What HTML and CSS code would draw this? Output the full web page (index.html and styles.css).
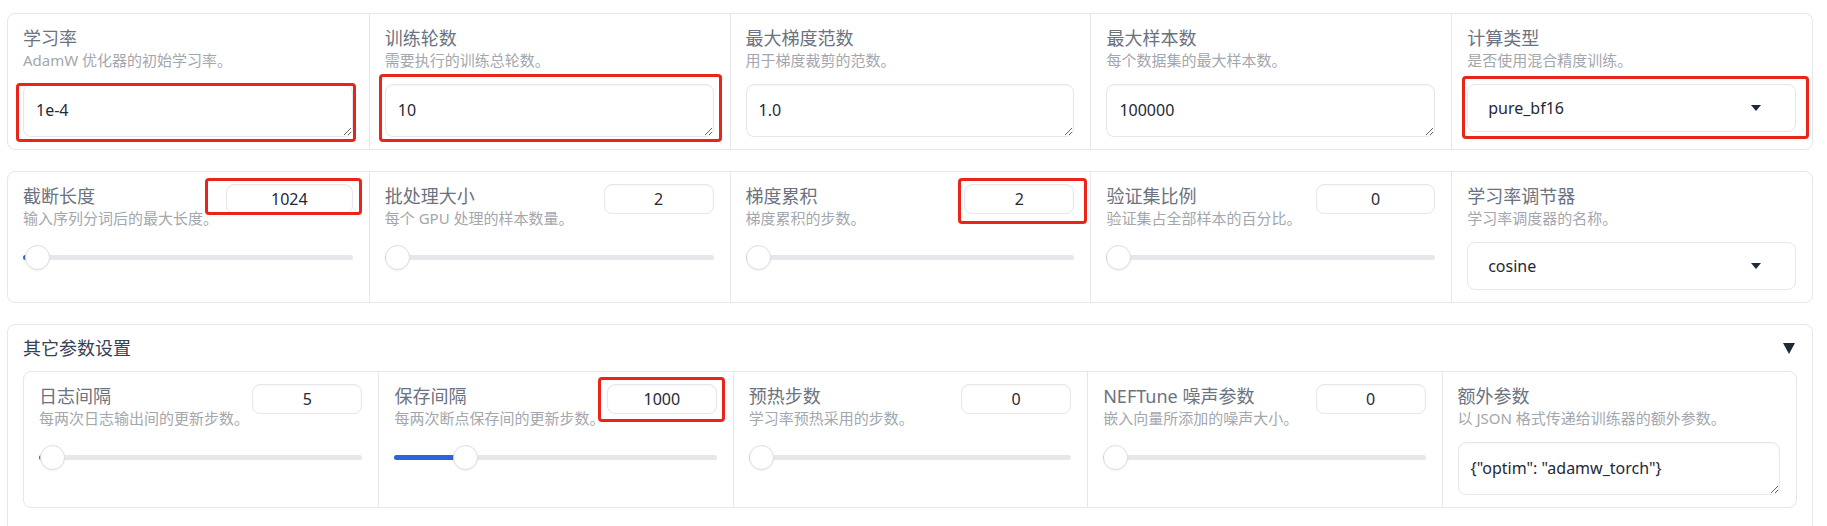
FILE: index.html
```html
<!DOCTYPE html>
<html lang="zh">
<head>
    <meta charset="UTF-8">
    <meta name="viewport" content="width=device-width, initial-scale=1.0">
    <title>训练参数</title>
    <link rel="stylesheet" href="styles.css">
</head>
<body>

    <div class="page">

        <!-- Row 1: basic training params -->
        <div class="block grid">
            <div class="cell">
                <div class="head">
                    <div class="text">
                        <span class="label">学习率</span>
                        <span class="info">AdamW 优化器的初始学习率。</span>
                    </div>
                </div>
                <div class="control">
                    <textarea class="box" rows="1">1e-4</textarea>
                    <span class="mark m-lr"></span>
                </div>
            </div>
            <div class="cell">
                <div class="head">
                    <div class="text">
                        <span class="label">训练轮数</span>
                        <span class="info">需要执行的训练总轮数。</span>
                    </div>
                </div>
                <div class="control">
                    <textarea class="box" rows="1">10</textarea>
                    <span class="mark m-epochs"></span>
                </div>
            </div>
            <div class="cell">
                <div class="head">
                    <div class="text">
                        <span class="label">最大梯度范数</span>
                        <span class="info">用于梯度裁剪的范数。</span>
                    </div>
                </div>
                <div class="control">
                    <textarea class="box" rows="1">1.0</textarea>
                </div>
            </div>
            <div class="cell">
                <div class="head">
                    <div class="text">
                        <span class="label">最大样本数</span>
                        <span class="info">每个数据集的最大样本数。</span>
                    </div>
                </div>
                <div class="control">
                    <textarea class="box" rows="1">100000</textarea>
                </div>
            </div>
            <div class="cell">
                <div class="head">
                    <div class="text">
                        <span class="label">计算类型</span>
                        <span class="info">是否使用混合精度训练。</span>
                    </div>
                </div>
                <div class="control">
                    <div class="dropdown">
                        <span>pure_bf16</span>
                        <svg class="caret" width="10" height="6" viewBox="0 0 10 6"><polygon points="0,0 10,0 5,6"/></svg>
                    </div>
                    <span class="mark m-dtype"></span>
                </div>
            </div>
        </div>

        <!-- Row 2: sliders -->
        <div class="block grid">
            <div class="cell">
                <div class="head">
                    <div class="text">
                        <span class="label">截断长度</span>
                        <span class="info">输入序列分词后的最大长度。</span>
                    </div>
                    <div class="num-wrap">
                        <input class="num wide" value="1024">
                        <span class="mark m-cutoff"></span>
                    </div>
                </div>
                <div class="slider" style="--p: 0.005">
                    <div class="track"><div class="fill"></div></div>
                    <div class="thumb"></div>
                </div>
            </div>
            <div class="cell">
                <div class="head">
                    <div class="text">
                        <span class="label">批处理大小</span>
                        <span class="info">每个 GPU 处理的样本数量。</span>
                    </div>
                    <div class="num-wrap">
                        <input class="num" value="2">
                    </div>
                </div>
                <div class="slider" style="--p: 0">
                    <div class="track"><div class="fill"></div></div>
                    <div class="thumb"></div>
                </div>
            </div>
            <div class="cell">
                <div class="head">
                    <div class="text">
                        <span class="label">梯度累积</span>
                        <span class="info">梯度累积的步数。</span>
                    </div>
                    <div class="num-wrap">
                        <input class="num" value="2">
                        <span class="mark m-accum"></span>
                    </div>
                </div>
                <div class="slider" style="--p: 0">
                    <div class="track"><div class="fill"></div></div>
                    <div class="thumb"></div>
                </div>
            </div>
            <div class="cell">
                <div class="head">
                    <div class="text">
                        <span class="label">验证集比例</span>
                        <span class="info">验证集占全部样本的百分比。</span>
                    </div>
                    <div class="num-wrap">
                        <input class="num mid" value="0">
                    </div>
                </div>
                <div class="slider" style="--p: 0">
                    <div class="track"><div class="fill"></div></div>
                    <div class="thumb"></div>
                </div>
            </div>
            <div class="cell">
                <div class="head">
                    <div class="text">
                        <span class="label">学习率调节器</span>
                        <span class="info">学习率调度器的名称。</span>
                    </div>
                </div>
                <div class="control">
                    <div class="dropdown">
                        <span>cosine</span>
                        <svg class="caret" width="10" height="6" viewBox="0 0 10 6"><polygon points="0,0 10,0 5,6"/></svg>
                    </div>
                </div>
            </div>
        </div>

        <!-- Row 3: other settings accordion -->
        <div class="block accordion">
            <div class="acc-title">
                <span>其它参数设置</span>
                <svg width="12" height="11" viewBox="0 0 12 11"><polygon points="0,0 12,0 6,11" fill="#1f2937"/></svg>
            </div>
            <div class="inner grid">
                <div class="cell">
                    <div class="head">
                        <div class="text">
                            <span class="label">日志间隔</span>
                            <span class="info">每两次日志输出间的更新步数。</span>
                        </div>
                        <div class="num-wrap">
                            <input class="num" value="5">
                        </div>
                    </div>
                    <div class="slider" style="--p: 0.005">
                        <div class="track"><div class="fill"></div></div>
                        <div class="thumb"></div>
                    </div>
                </div>
                <div class="cell">
                    <div class="head">
                        <div class="text">
                            <span class="label">保存间隔</span>
                            <span class="info">每两次断点保存间的更新步数。</span>
                        </div>
                        <div class="num-wrap">
                            <input class="num" value="1000">
                            <span class="mark m-save"></span>
                        </div>
                    </div>
                    <div class="slider" style="--p: 0.198">
                        <div class="track"><div class="fill"></div></div>
                        <div class="thumb"></div>
                    </div>
                </div>
                <div class="cell">
                    <div class="head">
                        <div class="text">
                            <span class="label">预热步数</span>
                            <span class="info">学习率预热采用的步数。</span>
                        </div>
                        <div class="num-wrap">
                            <input class="num" value="0">
                        </div>
                    </div>
                    <div class="slider" style="--p: 0">
                        <div class="track"><div class="fill"></div></div>
                        <div class="thumb"></div>
                    </div>
                </div>
                <div class="cell">
                    <div class="head">
                        <div class="text">
                            <span class="label">NEFTune 噪声参数</span>
                            <span class="info">嵌入向量所添加的噪声大小。</span>
                        </div>
                        <div class="num-wrap">
                            <input class="num" value="0">
                        </div>
                    </div>
                    <div class="slider" style="--p: 0">
                        <div class="track"><div class="fill"></div></div>
                        <div class="thumb"></div>
                    </div>
                </div>
                <div class="cell">
                    <div class="head">
                        <div class="text">
                            <span class="label">额外参数</span>
                            <span class="info">以 JSON 格式传递给训练器的额外参数。</span>
                        </div>
                    </div>
                    <div class="control">
                        <textarea class="box" rows="1">{"optim": "adamw_torch"}</textarea>
                    </div>
                </div>
            </div>
        </div>

    </div>

</body>
</html>
```

FILE: styles.css
```css
body {
    margin: 0;
    background: #fff;
    font-family: "Noto Sans", "Noto Sans CJK SC", sans-serif;
    color: #1f2937;
}

.page {
    padding: 13px 14px 0 7px;
}

.block {
    border: 1px solid #e5e7eb;
    border-radius: 8px;
    background: #fff;
    margin-bottom: 21px;
}

.grid {
    display: grid;
    grid-template-columns: repeat(5, 1fr);
}

.cell {
    padding: 12px 16px 12px 15px;
    min-width: 0;
}

.cell + .cell {
    border-left: 1px solid #e5e7eb;
}

.head {
    display: flex;
    justify-content: space-between;
    align-items: flex-start;
    height: 44px;
}

.text {
    display: flex;
    flex-direction: column;
}

.label {
    font-size: 18px;
    line-height: 24px;
    color: #6b7280;
}

.info {
    font-size: 15px;
    line-height: 20px;
    color: #a3a7ae;
    white-space: nowrap;
}

/* Inputs */
.control {
    position: relative;
    margin-top: 14px;
}

.box {
    display: block;
    box-sizing: border-box;
    width: 100%;
    height: 53px;
    padding: 13px 12px;
    border: 1px solid #e5e7eb;
    border-radius: 8px;
    box-shadow: inset 0 1px 2px rgba(0, 0, 0, 0.04);
    font-family: inherit;
    font-size: 16px;
    line-height: 24px;
    color: #1f2937;
    resize: vertical;
    outline: none;
}

.dropdown {
    display: flex;
    justify-content: space-between;
    align-items: center;
    box-sizing: border-box;
    height: 48px;
    padding: 0 34px 0 20px;
    border: 1px solid #e5e7eb;
    border-radius: 8px;
    font-size: 16px;
    color: #1f2937;
}

.caret {
    fill: #1f2937;
}

.num-wrap {
    position: relative;
}

.num {
    display: block;
    box-sizing: border-box;
    width: 110px;
    height: 30px;
    border: 1px solid #e5e7eb;
    border-radius: 8px;
    box-shadow: inset 0 1px 2px rgba(0, 0, 0, 0.04);
    text-align: center;
    font-family: inherit;
    font-size: 16px;
    color: #1f2937;
    outline: none;
}

.num.wide {
    width: 127px;
}

.num.mid {
    width: 119px;
}

/* Slider */
.slider {
    position: relative;
    height: 30px;
    margin-top: 14px;
}

.track {
    position: absolute;
    left: 0;
    right: 0;
    top: 13px;
    height: 5px;
    border-radius: 3px;
    background: #e5e7eb;
    overflow: hidden;
}

.fill {
    height: 100%;
    width: calc(var(--p) * (100% - 25px) + 12px);
    background: #2c64d9;
}

.thumb {
    position: absolute;
    top: 3px;
    left: calc(var(--p) * (100% - 25px));
    width: 25px;
    height: 25px;
    box-sizing: border-box;
    border-radius: 50%;
    border: 1px solid #dcdee3;
    background: #fff;
    box-shadow: 0 1px 2px rgba(0, 0, 0, 0.06);
}

/* Accordion */
.accordion {
    padding: 11px 15px 40px;
}

.acc-title {
    display: flex;
    justify-content: space-between;
    align-items: center;
    padding-right: 2px;
    font-size: 18px;
    line-height: 24px;
    color: #374151;
    margin-bottom: 11px;
}

.inner {
    border: 1px solid #e5e7eb;
    border-radius: 8px;
}

/* Red annotation boxes drawn over the screenshot */
.mark {
    position: absolute;
    border: 3px solid #ea2418;
    border-radius: 4px;
    pointer-events: none;
}

.m-lr {
    left: -7px;
    right: -3px;
    top: -1px;
    bottom: -5px;
}

.m-epochs {
    left: -6px;
    right: -8px;
    top: -10px;
    bottom: -5px;
}

.m-dtype {
    left: -5px;
    right: -13px;
    top: -8px;
    bottom: -7px;
}

.m-cutoff {
    left: -21px;
    right: -9px;
    top: -6px;
    bottom: -1px;
}

.m-accum {
    left: -6px;
    right: -13px;
    top: -6px;
    bottom: -10px;
}

.m-save {
    left: -9px;
    right: -8px;
    top: -7px;
    bottom: -8px;
}
```
